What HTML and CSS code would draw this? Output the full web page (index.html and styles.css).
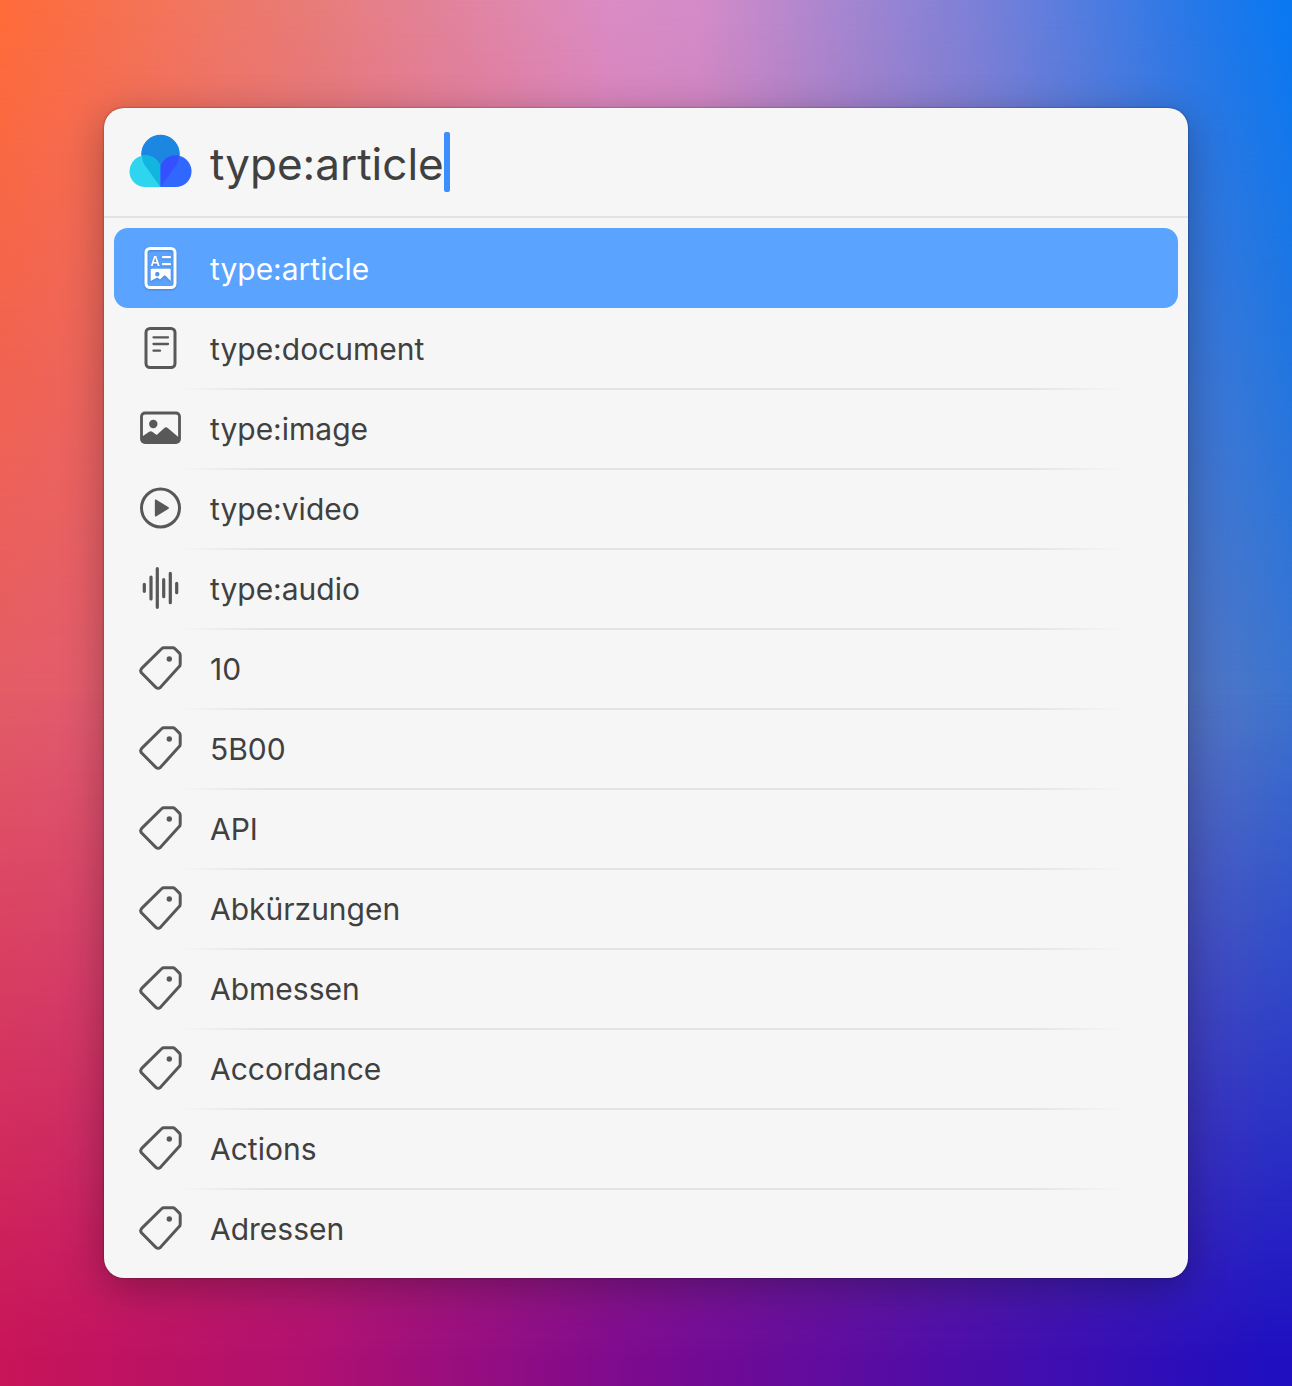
FILE: index.html
```html
<!DOCTYPE html>
<html lang="en">
<head>
<meta charset="utf-8">
<meta name="viewport" content="width=device-width, initial-scale=1">
<title>Search</title>
<link rel="stylesheet" href="styles.css">
</head>
<body>
<svg class="sprite" aria-hidden="true">
  <symbol id="tag" viewBox="0 0 44 44">
    <path d="M26 1.700h8.600q1.400 0 2.400 1l4.200 4.200q1 1 1 2.400v8.900q0 1.400-1 2.400L22.500 41.300q-2.300 2-4.600 0L3.700 27q-2-2.300 0-4.600L23.600 2.700q1-1 2.400-1z" fill="none" stroke="currentColor" stroke-width="3"/>
    <circle cx="31.300" cy="13" r="2.700" fill="currentColor"/>
  </symbol>
</svg>
<main class="panel">
  <label class="search">
    <svg class="logo" viewBox="0 0 64 54" role="img" aria-label="Search">
      <path d="M31.500 53L15.800 31.300a19.300 19.300 0 1 1 31.400 0z" fill="#1b87e0"/>
      <path d="M31.500 53H16.300a15.800 15.800 0 1 1 15.200-20z" fill="#2fd5ee"/>
      <path d="M31.500 53h15.200a15.800 15.800 0 1 0-15.200-20z" fill="#3068ff"/>
      <path d="M31.500 53L15.800 31.300a19.300 19.300 0 0 1-2.900-9.700 15.800 15.800 0 0 1 18.600 11.400z" fill="#12b4e0"/>
      <path d="M31.500 53l15.700-21.700a19.300 19.300 0 0 0 2.900-9.700 15.800 15.800 0 0 0-18.600 11.400z" fill="#3450ff"/>
    </svg>
    <span class="query">
      <input class="field" type="text" value="type:article" aria-label="Search query" spellcheck="false">
      <span class="caret"></span>
    </span>
  </label>
  <ul class="results">
    <li class="item selected"><button class="row" type="button">
      <svg class="icon" viewBox="0 0 44 44" aria-hidden="true">
        <rect x="8" y="2.500" width="29" height="39" rx="4" fill="none" stroke="currentColor" stroke-width="3"/>
        <text class="glyph" x="12.500" y="20">A</text>
        <path d="M25 11.200h7M25 18.200h7" stroke="currentColor" stroke-width="2.200" stroke-linecap="round"/>
        <path fill-rule="evenodd" d="M14 22.700h17.500q1.200 0 1.200 1.200V35l-5.200-5.200q-.8-.7-1.600 0L22 33.500l-2-1.500q-.8-.6-1.600 0L12.700 35V23.900q0-1.200 1.300-1.200zM19.300 26a2.200 2.200 0 1 0 0 4.400 2.200 2.200 0 0 0 0-4.400z" fill="currentColor"/>
      </svg><span class="name">type:article</span></button></li>
    <li class="item"><button class="row" type="button">
      <svg class="icon" viewBox="0 0 44 44" aria-hidden="true">
        <rect x="8" y="2.500" width="29" height="39" rx="4" fill="none" stroke="currentColor" stroke-width="3"/>
        <path d="M15.500 11.300h14.500M15.500 18h14.500M15.500 24.700h6.500" stroke="currentColor" stroke-width="2.300" stroke-linecap="round"/>
      </svg><span class="name">type:document</span></button></li>
    <li class="item"><button class="row" type="button">
      <svg class="icon" viewBox="0 0 44 44" aria-hidden="true">
        <rect x="3.500" y="7" width="38" height="29.500" rx="3.500" fill="none" stroke="currentColor" stroke-width="2.800"/>
        <circle cx="15.300" cy="18" r="4.200" fill="currentColor"/>
        <path d="M3.500 31l7.700-5.300q1.500-1 3 0l4.500 3.300 7.600-7q1.700-1.400 3.400 0L41.500 32v3q0 2-2 2h-34q-2 0-2-2z" fill="currentColor"/>
      </svg><span class="name">type:image</span></button></li>
    <li class="item"><button class="row" type="button">
      <svg class="icon" viewBox="0 0 44 44" aria-hidden="true">
        <circle cx="22.500" cy="22" r="19" fill="none" stroke="currentColor" stroke-width="3"/>
        <path d="M17.600 14.200v15.600l12.600-7.800z" fill="currentColor" stroke="currentColor" stroke-width="1.500" stroke-linejoin="round"/>
      </svg><span class="name">type:video</span></button></li>
    <li class="item"><button class="row" type="button">
      <svg class="icon" viewBox="0 0 44 44" aria-hidden="true">
        <path d="M6.300 18.300v7M13 11v22M19.300 2.700v38.600M25.700 13.700v17M32.300 7.300v29.400M38.700 17.300v9.400" stroke="currentColor" stroke-width="3.200" stroke-linecap="round"/>
      </svg><span class="name">type:audio</span></button></li>
    <li class="item"><button class="row" type="button"><svg class="icon" aria-hidden="true"><use href="#tag"/></svg><span class="name">10</span></button></li>
    <li class="item"><button class="row" type="button"><svg class="icon" aria-hidden="true"><use href="#tag"/></svg><span class="name">5B00</span></button></li>
    <li class="item"><button class="row" type="button"><svg class="icon" aria-hidden="true"><use href="#tag"/></svg><span class="name">API</span></button></li>
    <li class="item"><button class="row" type="button"><svg class="icon" aria-hidden="true"><use href="#tag"/></svg><span class="name">Abkürzungen</span></button></li>
    <li class="item"><button class="row" type="button"><svg class="icon" aria-hidden="true"><use href="#tag"/></svg><span class="name">Abmessen</span></button></li>
    <li class="item"><button class="row" type="button"><svg class="icon" aria-hidden="true"><use href="#tag"/></svg><span class="name">Accordance</span></button></li>
    <li class="item"><button class="row" type="button"><svg class="icon" aria-hidden="true"><use href="#tag"/></svg><span class="name">Actions</span></button></li>
    <li class="item"><button class="row" type="button"><svg class="icon" aria-hidden="true"><use href="#tag"/></svg><span class="name">Adressen</span></button></li>
  </ul>
</main>
</body>
</html>
```
FILE: styles.css
```css
* {
  box-sizing: border-box;
}

body {
  position: relative;
  z-index: 0;
  min-height: 100vh;
  margin: 0;
  padding: 108px 104px;
  font-family: Inter, "Liberation Sans", sans-serif;
  color: #404040;
  background: linear-gradient(90deg, #e45c68 0%, #d8588c 40%, #4a76c8 96%, #3c74d0 100%);
}

/* Top and bottom colour bands fade into the middle one */
body::before,
body::after {
  content: "";
  position: absolute;
  inset: 0;
  z-index: -1;
}

body::before {
  background: linear-gradient(90deg, #ff6b38 0%, #e87c78 24%, #db8cc4 47%, #d48cc8 54%, #7a80d8 76%, #2878e8 92%, #0878f2 100%);
  mask-image: linear-gradient(#000 0%, transparent 52%);
}

body::after {
  background: linear-gradient(90deg, #c81458 0%, #b01070 24%, #7a0a90 50%, #200fc0 98%);
  mask-image: linear-gradient(transparent 50%, #000 98%);
}

.sprite {
  position: absolute;
  width: 0;
  height: 0;
}

.panel {
  overflow: hidden;
  border-radius: 20px;
  background: #f6f6f6;
  box-shadow: 0 0 2px rgba(0, 0, 0, 0.5), 0 10px 40px rgba(0, 0, 0, 0.3);
}

.search {
  display: flex;
  align-items: center;
  gap: 17px;
  height: 110px;
  padding: 0 25px;
  border-bottom: 2px solid #e3e3e3;
}

.logo {
  flex: none;
  width: 64px;
  height: 54px;
  margin-bottom: 2px;
}

.query {
  display: flex;
  align-items: center;
  min-width: 0;
}

.field {
  field-sizing: content;
  min-width: 0;
  height: 64px;
  padding: 4px 0 0;
  border: 0;
  outline: 0;
  background: none;
  color: inherit;
  font: 400 44px/60px Inter, "Liberation Sans", sans-serif;
}

.caret {
  flex: none;
  width: 6px;
  height: 60px;
  border-radius: 2px;
  background: #3b8efc;
}

.results {
  margin: 0;
  padding: 10px;
  list-style: none;
}

.item {
  border-radius: 14px;
}

.item + .item + .item {
  background: linear-gradient(90deg, transparent 6%, #e4e4e4 14%, #e4e4e4 86%, transparent 95%) top / 100% 2px no-repeat;
}

.row {
  display: flex;
  align-items: center;
  gap: 28px;
  width: 100%;
  height: 80px;
  padding: 0 24px;
  border: 0;
  background: none;
  color: inherit;
  font: 400 30px/40px Inter, "Liberation Sans", sans-serif;
  text-align: left;
}

.name {
  padding-top: 2px;
}

.icon {
  flex: none;
  width: 44px;
  height: 44px;
  color: #585858;
}

.selected {
  background: #5aa3ff;
  color: #fff;
}

.selected .icon {
  color: #fff;
  filter: drop-shadow(0 1px 1px rgba(0, 0, 0, 0.2));
}

.glyph {
  fill: currentColor;
  font-size: 13px;
  font-weight: 600;
}
```
